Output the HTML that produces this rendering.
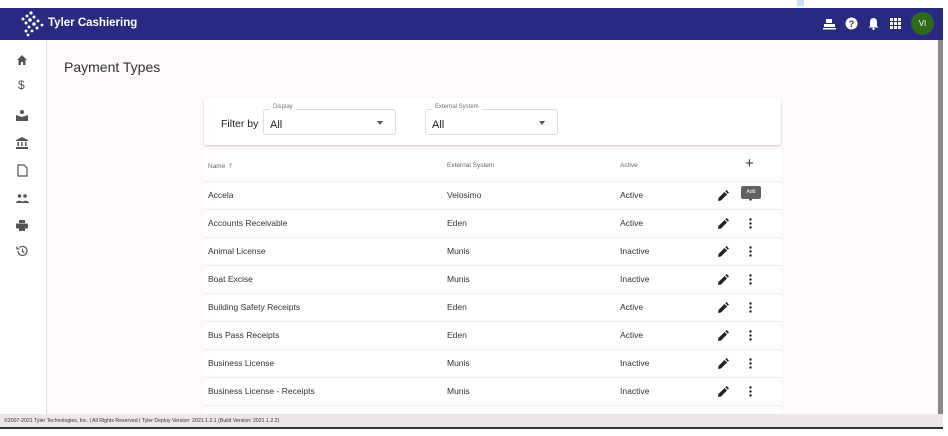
<!DOCTYPE html>
<html><head><meta charset="utf-8"><style>
*{box-sizing:border-box;margin:0;padding:0}
body{width:948px;height:436px;overflow:hidden;background:#fff;font-family:"Liberation Sans",sans-serif;position:relative;color:#222}
.hdr{position:absolute;left:0;top:8px;width:943px;height:32px;background:#272a80;color:#fff}
.side{position:absolute;left:0;top:40px;width:47px;height:374px;background:#fff;border-right:1px solid #e4e0e4}
.main{position:absolute;left:47px;top:40px;width:891px;height:374px;background:#fdf9fd}
.sb{position:absolute;left:938px;top:40px;width:5px;height:374px;background:#8a8a8a}
.foot{position:absolute;left:0;top:414px;width:943px;height:15px;background:#ebe7eb;border-bottom:2px solid #333;font-size:5.2px;color:#333;padding:4px 0 0 4px;white-space:nowrap}
.card{position:absolute;left:204px;width:577px;background:#fff;box-shadow:0 1px 2px rgba(0,0,0,.2);border-radius:3px}
.sel{position:absolute;top:11px;height:26px;border:1px solid #ddd;border-radius:3px;font-size:11px;padding:9px 0 0 6px}
.sel .l{position:absolute;top:-6px;left:6px;background:#fff;font-size:6px;color:#777;padding:0 3px}
.sel .a{position:absolute;right:12px;top:11px;border:3.5px solid transparent;border-top:4px solid #555}
.row{position:absolute;left:0;width:577px;height:28px;border-bottom:1px solid #eee;font-size:8.5px;color:#333}
.row span{position:absolute;top:8px}
</style></head><body>
<div style="position:absolute;left:797px;top:0;width:7px;height:6px;background:#cfe0fb"></div>
<div class="hdr">
<svg style="position:absolute;left:18px;top:3px" width="26" height="26" viewBox="0 0 26 26" fill="#fff">
<circle cx="13" cy="2" r="1.6"/><circle cx="9" cy="5" r="1.5"/><circle cx="16" cy="6" r="1.5"/><circle cx="5" cy="8" r="1.5"/><circle cx="12" cy="9" r="1.8"/><circle cx="20" cy="10" r="1.5"/><circle cx="8" cy="12" r="1.5"/><circle cx="16" cy="13" r="1.8"/><circle cx="24" cy="14" r="1.4"/><circle cx="11" cy="16" r="1.5"/><circle cx="19" cy="17" r="1.5"/><circle cx="8" cy="20" r="1.5"/><circle cx="14" cy="20" r="1.4"/><circle cx="10" cy="24" r="1.4"/></svg>
<div style="position:absolute;left:48px;top:9px;font-size:11.5px;font-weight:bold">Tyler Cashiering</div>
<svg style="position:absolute;left:823px;top:10px" width="13" height="12" viewBox="0 0 13 12" fill="#fff"><rect x="3" y="1" width="6" height="4"/><rect x="1" y="6" width="11" height="3"/><rect x="0" y="10" width="13" height="1.5"/></svg>
<svg style="position:absolute;left:845px;top:9px" width="13" height="13" viewBox="0 0 13 13"><circle cx="6.5" cy="6.5" r="6" fill="#fff"/><text x="6.5" y="10" font-size="9" font-weight="bold" text-anchor="middle" fill="#272a80" font-family="Liberation Sans">?</text></svg>
<svg style="position:absolute;left:868px;top:9px" width="11" height="13" viewBox="0 0 11 13" fill="#fff"><path d="M5.5 1C3 1 2 3 2 5v4L0.5 10.5h10L9 9V5C9 3 8 1 5.5 1z"/><circle cx="5.5" cy="11.8" r="1.2"/></svg>
<svg style="position:absolute;left:890px;top:10px" width="11" height="11" viewBox="0 0 11 11" fill="#fff"><rect x="0" y="0" width="3" height="3"/><rect x="4" y="0" width="3" height="3"/><rect x="8" y="0" width="3" height="3"/><rect x="0" y="4" width="3" height="3"/><rect x="4" y="4" width="3" height="3"/><rect x="8" y="4" width="3" height="3"/><rect x="0" y="8" width="3" height="3"/><rect x="4" y="8" width="3" height="3"/><rect x="8" y="8" width="3" height="3"/></svg>
<div style="position:absolute;left:911px;top:4px;width:23px;height:23px;border-radius:50%;background:#2d6a1a;font-size:8px;text-align:center;line-height:23px">VI</div>
</div>
<div class="side">
<svg style="position:absolute;left:17px;top:15px" width="10" height="10" viewBox="0 0 10 10" fill="#555"><path d="M5 0L0 5h1.5v5h2.5V7h2v3h2.5V5H10z"/></svg>
<div style="position:absolute;left:18px;top:38px;font-size:12px;color:#555">$</div>
<svg style="position:absolute;left:16px;top:70px" width="12" height="11" viewBox="0 0 12 11" fill="#555"><circle cx="6" cy="2" r="2"/><path d="M0 5l6 2 6-2v6H0z"/></svg>
<svg style="position:absolute;left:16px;top:97px" width="12" height="12" viewBox="0 0 12 12" fill="#555"><path d="M6 0l6 3v1H0V3z"/><rect x="1.5" y="5" width="1.5" height="4"/><rect x="5.2" y="5" width="1.5" height="4"/><rect x="9" y="5" width="1.5" height="4"/><rect x="0" y="10" width="12" height="2"/></svg>
<svg style="position:absolute;left:17px;top:124px" width="11" height="13" viewBox="0 0 11 13" fill="none" stroke="#555" stroke-width="1.2"><path d="M1 1h6l3 3v8H1z"/></svg>
<svg style="position:absolute;left:16px;top:154px" width="13" height="9" viewBox="0 0 13 9" fill="#555"><circle cx="3.5" cy="2" r="1.8"/><circle cx="9" cy="2" r="1.8"/><path d="M0 9c0-3 7-3 7 0zM6 9c0-3 7-3 7 0z"/></svg>
<svg style="position:absolute;left:16px;top:180px" width="12" height="11" viewBox="0 0 12 11" fill="#555"><rect x="3" y="0" width="6" height="3"/><rect x="0" y="3.5" width="12" height="5" rx="1"/><rect x="3" y="7" width="6" height="4"/></svg>
<svg style="position:absolute;left:16px;top:205px" width="12" height="12" viewBox="0 0 12 12" fill="none" stroke="#555" stroke-width="1.2"><path d="M2 6a4.5 4.5 0 1 0 1.5-3.4"/><path d="M1 1.5v2.5h2.5"/><path d="M6.5 3.5v3l2 1.2"/></svg>
</div>
<div class="main">
<div style="position:absolute;left:17px;top:19px;font-size:14px;color:#333">Payment Types</div>
</div>
<div class="card" style="top:98px;height:47px">
<div style="position:absolute;left:17px;top:20px;font-size:10.5px;color:#222">Filter by</div>
<div class="sel" style="left:59px;width:133px"><span class="l">Display</span>All<span class="a"></span></div>
<div class="sel" style="left:221px;width:133px"><span class="l">External System</span>All<span class="a"></span></div>
</div>
<div class="card" style="top:150px;height:264px;box-shadow:none;border-radius:0">
<div class="row" style="top:0;height:32px;font-size:6.5px;color:#666"><span style="left:4px;top:12px">Name &nbsp;🡑</span><span style="left:243px;top:12px">External System</span><span style="left:416px;top:12px">Active</span><span style="left:541px;top:5px;font-size:15px;color:#333">+</span></div>
</div>
<div id="rows"></div>
<div style="position:absolute;left:741px;top:186px;width:20px;height:13px;background:#616161;border-radius:2px;color:#fff;font-size:5px;text-align:center;line-height:13px">Add</div>
<div class="sb"></div>
<div class="foot">©2007-2021 Tyler Technologies, Inc. | All Rights Reserved | Tyler Deploy Version: 2021.1.2.1 (Build Version: 2021.1.2.2)</div>
<script>
var d=[["Accela","Velosimo","Active"],["Accounts Receivable","Eden","Active"],["Animal License","Munis","Inactive"],["Boat Excise","Munis","Inactive"],["Building Safety Receipts","Eden","Active"],["Bus Pass Receipts","Eden","Active"],["Business License","Munis","Inactive"],["Business License - Receipts","Munis","Inactive"],["","",""]];
var h="";d.forEach(function(r,i){var t=182+i*28;
h+='<div class="row" style="left:204px;top:'+t+'px"><span style="left:4px">'+r[0]+'</span><span style="left:243px">'+r[1]+'</span><span style="left:416px">'+r[2]+'</span>'+
'<svg style="position:absolute;left:514px;top:'+(i==8?22:8)+'px" width="11" height="11" viewBox="0 0 11 11" fill="#222"><path d="M0 11l0.5-3 6-6 2.5 2.5-6 6z"/><path d="M7.3 1.2l1.2-1.2 2.5 2.5-1.2 1.2z"/></svg>'+
'<svg style="position:absolute;left:545px;top:'+(i==8?22:8)+'px" width="3" height="11" viewBox="0 0 3 11" fill="#222"><circle cx="1.5" cy="1.5" r="1.2"/><circle cx="1.5" cy="5.5" r="1.2"/><circle cx="1.5" cy="9.5" r="1.2"/></svg></div>';});
document.getElementById("rows").outerHTML=h.replace(/class="row" style="left:204px;top:406px"/,'class="row" style="left:204px;top:406px;height:8px;overflow:hidden;border:0"');
</script>
</body></html>
